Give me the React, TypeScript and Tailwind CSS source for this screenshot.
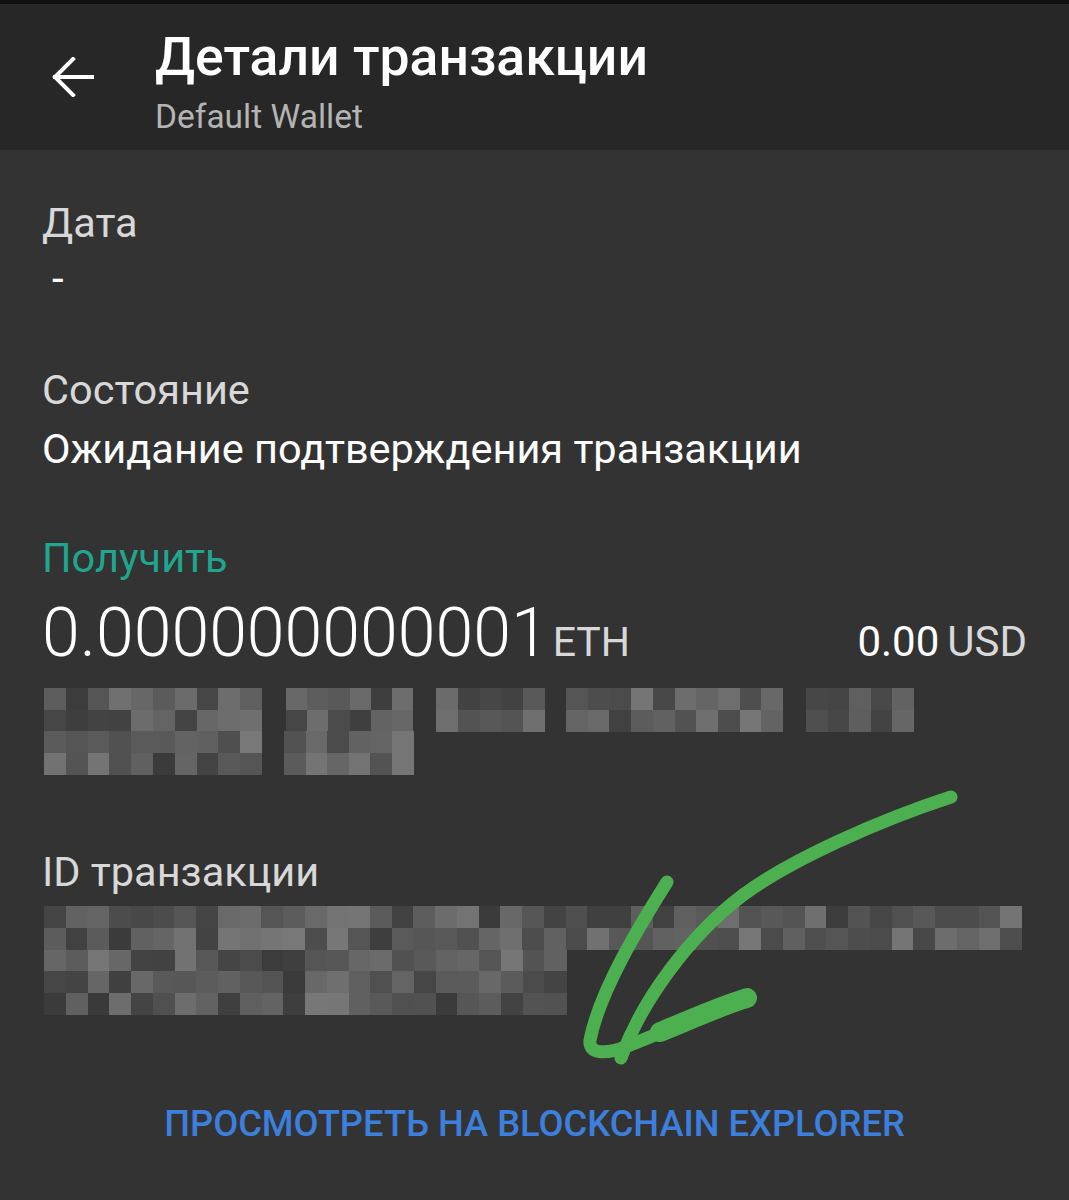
import React from "react";

type Seg = { x: number; w: number; rows: number; row: number };

const CELL = 21.6;

// deterministic pseudo-random greys for the blurred (pixelated) areas
function grey(seed: number) {
  const v = Math.abs(Math.sin(seed * 12.9898) * 43758.5453) % 1;
  const c = Math.round(58 + v * 62);
  return `rgb(${c},${c},${c})`;
}

const PixelBlock: React.FC<{ segs: Seg[]; rows: number; seed: number }> = ({
  segs,
  rows,
  seed,
}) => {
  return (
    <div className="relative w-full" style={{ height: rows * CELL }}>
      {segs.map((s, si) =>
        Array.from({ length: s.rows }).map((_, r) => {
          const cols = Math.round(s.w / CELL);
          return Array.from({ length: cols }).map((__, c) => (
            <div
              key={`${si}-${r}-${c}`}
              className="absolute"
              style={{
                left: s.x + (c * s.w) / cols,
                top: (s.row + r) * CELL,
                width: s.w / cols + 0.5,
                height: CELL + 0.5,
                background: grey(seed + si * 97 + r * 31 + c * 7),
              }}
            />
          ));
        })
      )}
    </div>
  );
};

const amountBlur: Seg[] = [
  { x: 2, w: 218, rows: 2, row: 0 },
  { x: 244, w: 127, rows: 2, row: 0 },
  { x: 394, w: 109, rows: 2, row: 0 },
  { x: 524, w: 217, rows: 2, row: 0 },
  { x: 764, w: 108, rows: 2, row: 0 },
  { x: 2, w: 218, rows: 2, row: 2 },
  { x: 242, w: 129, rows: 2, row: 2 },
];

const idBlur: Seg[] = [
  { x: 2, w: 978, rows: 2, row: 0 },
  { x: 2, w: 522, rows: 3, row: 2 },
];

const GreenArrow = () => (
  <svg
    className="pointer-events-none absolute left-0 top-0"
    width="1069"
    height="1200"
    viewBox="0 0 1069 1200"
    fill="none"
  >
    <g stroke="#4cb050" strokeLinecap="round" strokeLinejoin="round">
      <path
        d="M951 797 C 880 820, 790 860, 743 895 C 690 935, 642 1000, 621 1058"
        strokeWidth="13"
      />
      <path
        d="M667 882 C 640 925, 600 990, 590 1040 C 588 1056, 610 1053, 625 1047 C 670 1030, 710 1010, 750 997"
        strokeWidth="13"
      />
      <path d="M660 1032 C 690 1020, 720 1006, 747 998" strokeWidth="20" />
    </g>
  </svg>
);

export default function App() {
  return (
    <div
      className="relative h-[1200px] w-[1069px] overflow-hidden bg-[#333333] text-white"
      style={{ fontFamily: "Roboto, 'Noto Sans', sans-serif" }}
    >
      <div className="h-[4px] bg-[#0f0f0f]" />
      <header className="flex bg-[#272727] pb-[18px] pt-[27px]">
        <div className="flex w-[155px] shrink-0 pl-[52px] pt-[26px]">
          <svg width="42" height="40" viewBox="0 0 42 40" fill="none">
            <path
              d="M41 20H3M21 2 3 20l18 18"
              stroke="#ffffff"
              strokeWidth="4"
              strokeLinecap="square"
            />
          </svg>
        </div>
        <div className="flex flex-col">
          <h1 className="text-[53.5px] font-medium leading-[52px] text-white">
            Детали транзакции
          </h1>
          <p className="mt-[19px] text-[33.5px] leading-[30px] text-[#b4b4b4]">
            Default Wallet
          </p>
        </div>
      </header>

      <main className="flex flex-col px-[42px]">
        <div className="mt-[52px] text-[41.5px] leading-[42px] text-[#d8d8d8]">
          Дата
        </div>
        <div className="mt-[14px] pl-[10px] text-[42px] leading-[42px] text-white">
          -
        </div>

        <div className="mt-[69px] text-[41.5px] leading-[42px] text-[#d8d8d8]">
          Состояние
        </div>
        <div className="mt-[17px] text-[41.5px] leading-[42px] text-white">
          Ожидание подтверждения транзакции
        </div>

        <div className="mt-[67px] text-[41.5px] leading-[42px] text-[#20a68f]">
          Получить
        </div>
        <div className="mt-[21px] flex items-baseline justify-between leading-[66px]">
          <div className="flex items-baseline gap-[4px]">
            <span className="text-[68px] font-light text-white">0.000000000001</span>
            <span className="text-[41px] text-[#d8d8d8]">ETH</span>
          </div>
          <div className="flex items-baseline gap-[8px]">
            <span className="text-[42px] text-white">0.00</span>
            <span className="text-[42px] text-[#d8d8d8]">USD</span>
          </div>
        </div>
        <div className="mt-[13px]">
          <PixelBlock segs={amountBlur} rows={4} seed={3} />
        </div>

        <div className="mt-[77px] text-[41.5px] leading-[42px] text-[#d8d8d8]">
          ID транзакции
        </div>
        <div className="mt-[13px]">
          <PixelBlock segs={idBlur} rows={5} seed={11} />
        </div>

        <button className="mt-[92px] self-center text-[36.3px] font-medium leading-[36px] text-[#3c7fdc]">
          ПРОСМОТРЕТЬ НА BLOCKCHAIN EXPLORER
        </button>
      </main>

      <GreenArrow />
    </div>
  );
}
